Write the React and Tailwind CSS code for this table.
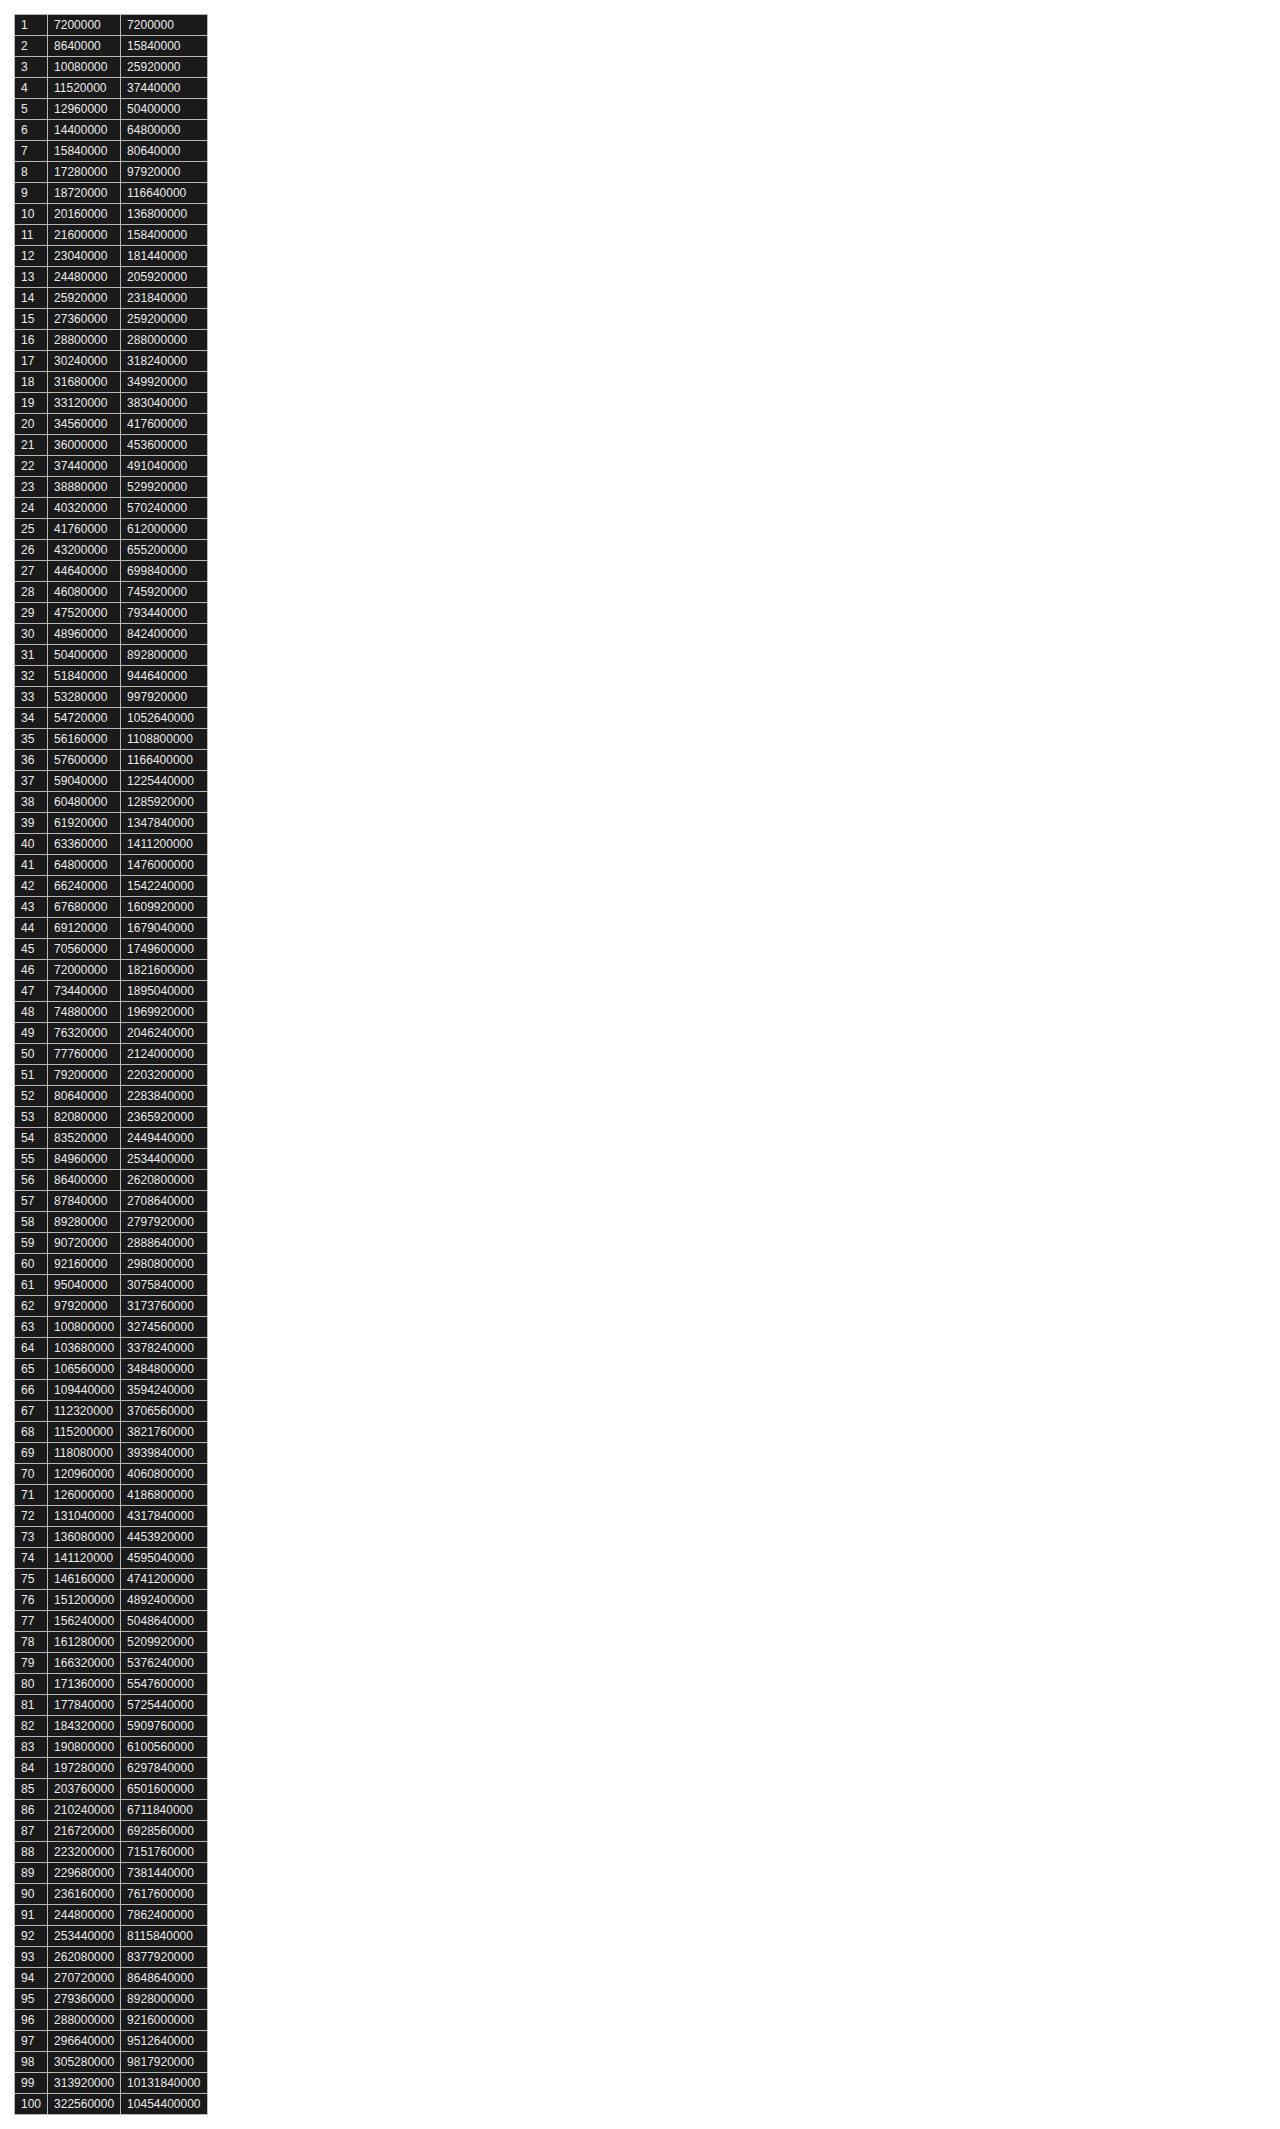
import React from 'react'

// per-row increase of the second column
function stepFor(n) {
  if (n <= 60) return 1440000
  if (n <= 70) return 2880000
  if (n <= 80) return 5040000
  if (n <= 90) return 6480000
  return 8640000
}

function buildRows() {
  const rows = []
  let value = 7200000
  let total = 0
  for (let n = 1; n <= 100; n++) {
    if (n > 1) value += stepFor(n)
    total += value
    rows.push({ n, value, total })
  }
  return rows
}

const ROWS = buildRows()

export default function App() {
  return (
    <div className="p-[14px] bg-white min-h-screen" style={{ fontFamily: '"Liberation Sans", Arial, sans-serif' }}>
      <table className="border-collapse text-[12px] leading-[14px] text-[#ececec]">
        <tbody>
          {ROWS.map(r => (
            <tr key={r.n} className="bg-[#1a1a1a]">
              <td className="border border-[#b8b8b8] px-[6px] py-[3px]">{r.n}</td>
              <td className="border border-[#b8b8b8] px-[6px] py-[3px]">{r.value}</td>
              <td className="border border-[#b8b8b8] px-[6px] py-[3px]">{r.total}</td>
            </tr>
          ))}
        </tbody>
      </table>
    </div>
  )
}
